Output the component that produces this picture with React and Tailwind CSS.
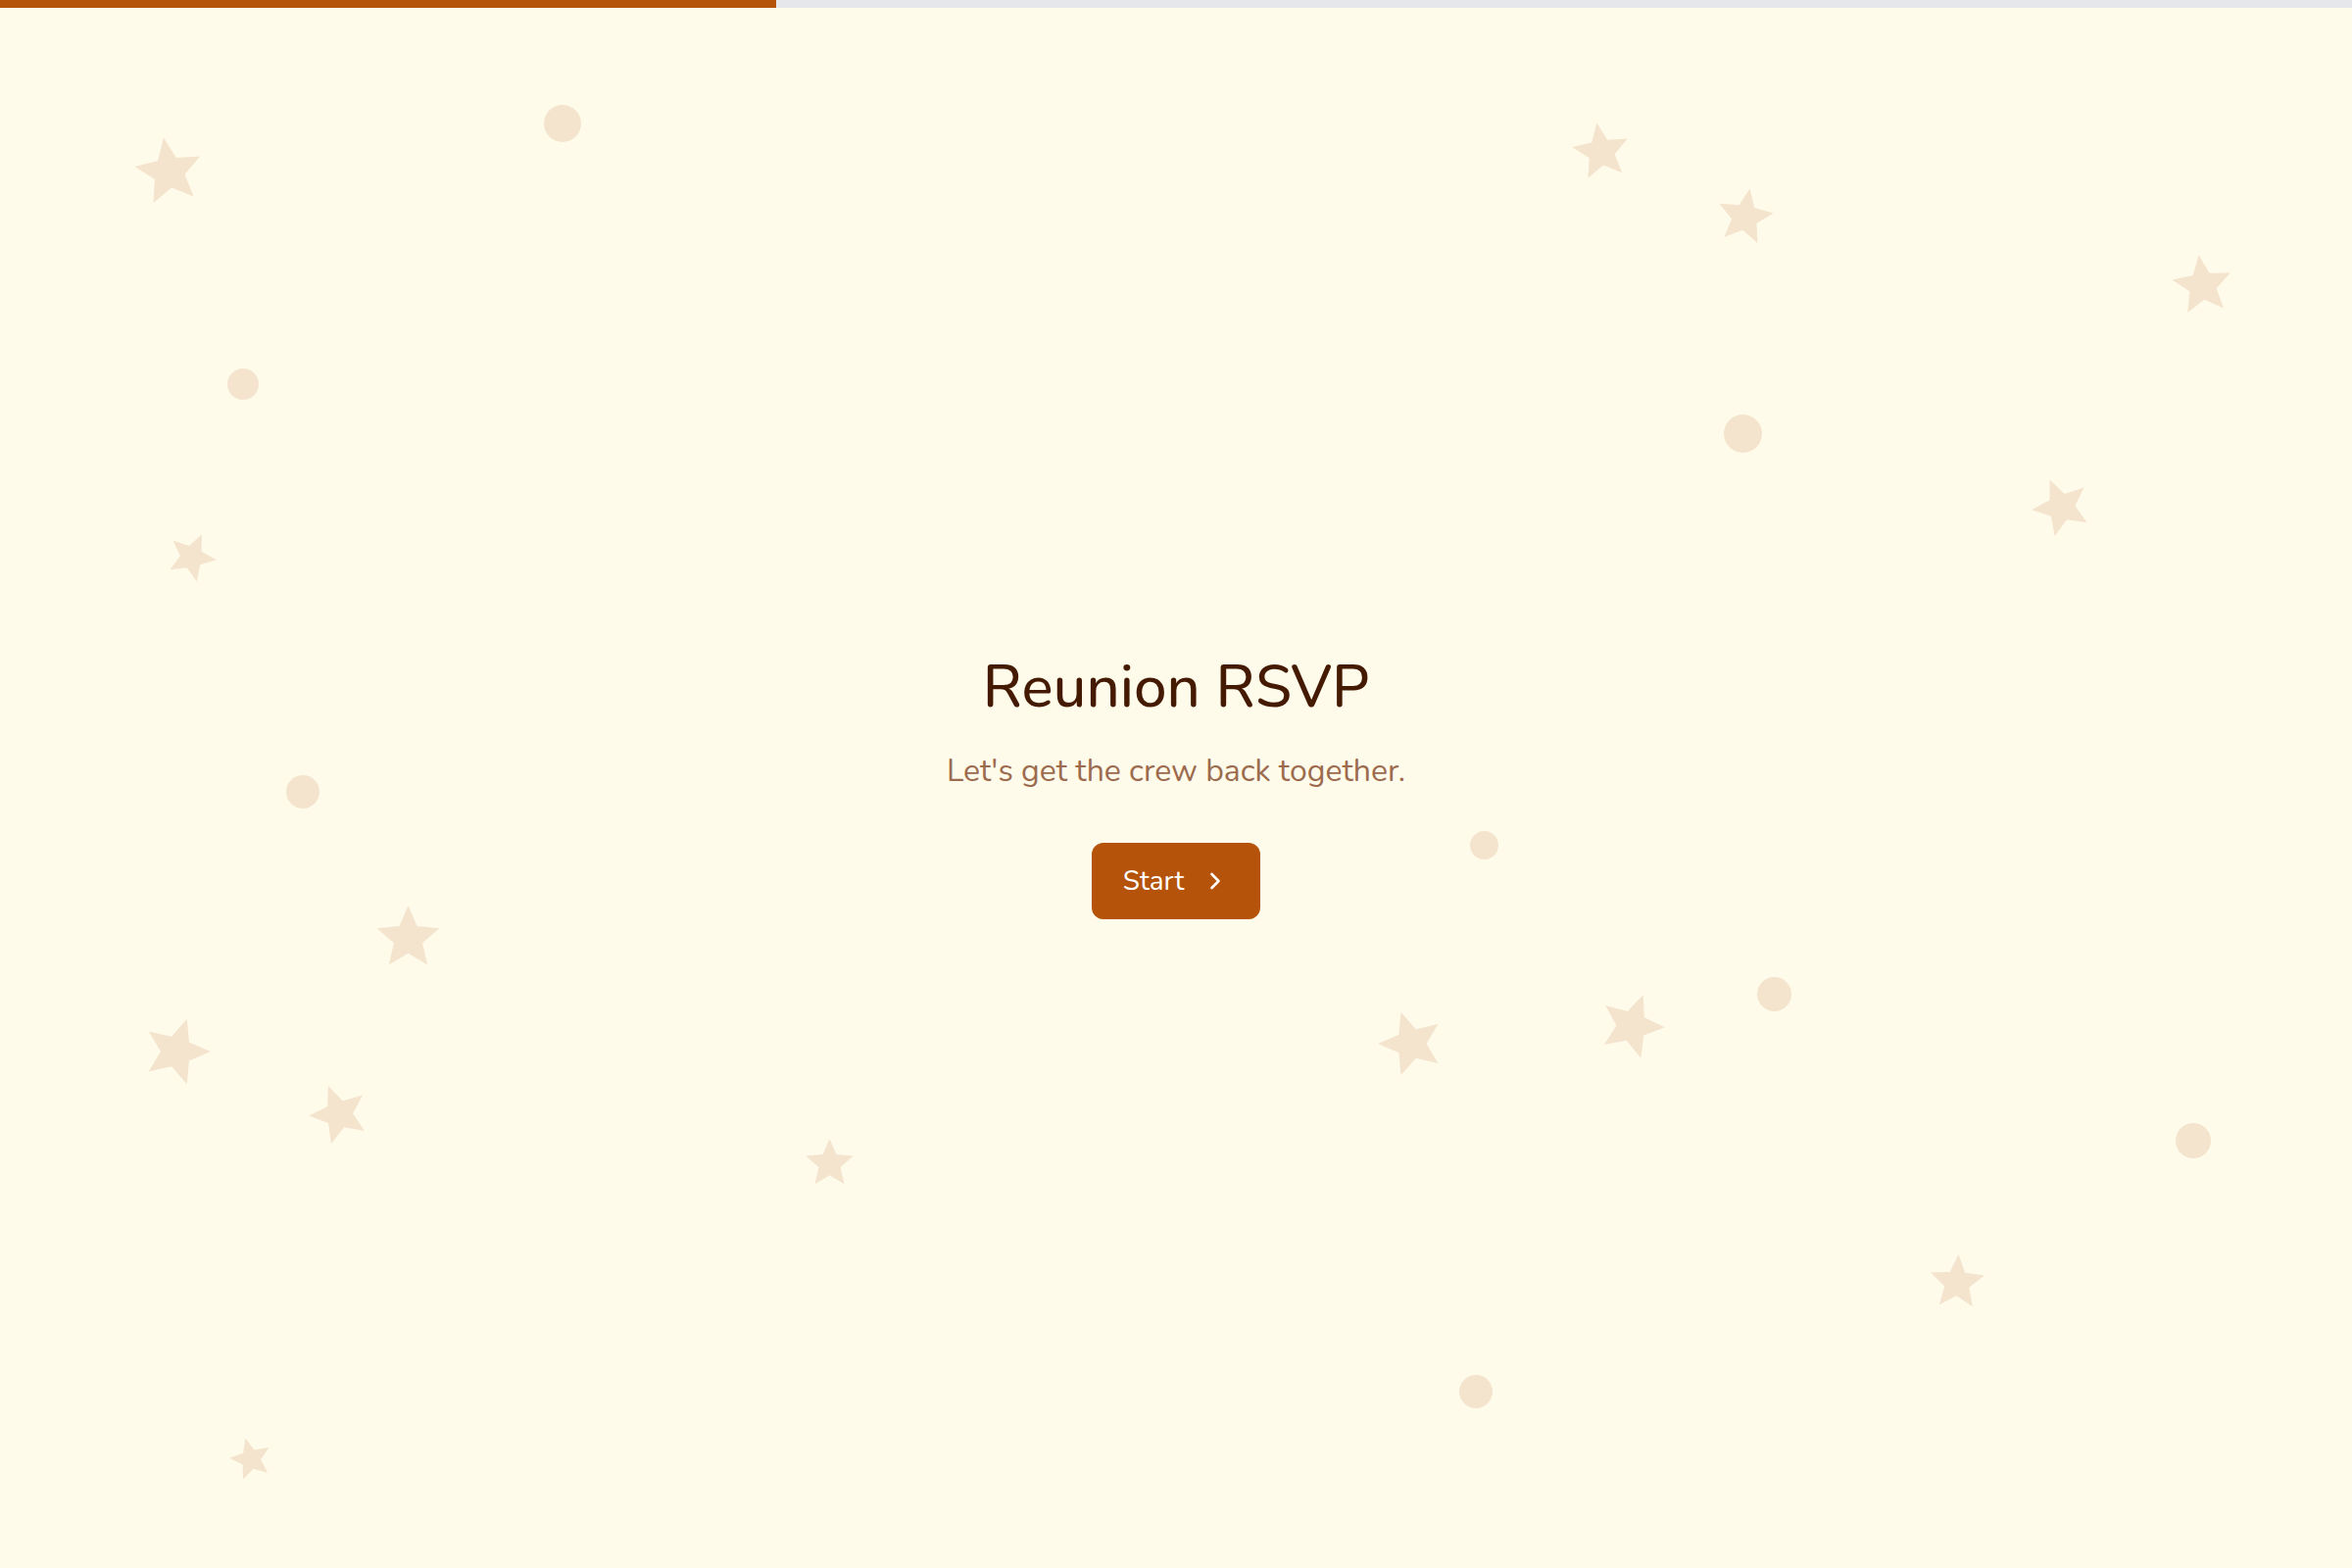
import { ChevronRight } from 'lucide-react';

const STAR_POINTS = '12,0 15.23,7.55 23.41,8.29 17.23,13.7 19.05,21.71 12,17.5 4.95,21.71 6.77,13.7 0.59,8.29 8.77,7.55';

// decorative confetti: [x, y, size, rotation]
const stars = [
  [172, 175, 71, -9],
  [195, 568, 51, 24],
  [1634, 155, 60, -9],
  [1780, 221, 59, 10],
  [2247, 291, 63, -7],
  [2103, 517, 61, -23],
  [416, 957, 67, 0],
  [180, 1073, 70, 18],
  [346, 1137, 62, -21],
  [846, 1187, 51, 0],
  [256, 1489, 44, -15],
  [1440, 1065, 68, -18],
  [1665, 1047, 68, 20],
  [1997, 1309, 58, 3],
];

const dots = [
  [574, 126, 38],
  [248, 392, 32],
  [1778, 442, 39],
  [309, 808, 34],
  [1514, 862, 29],
  [1810, 1014, 35],
  [2238, 1164, 36],
  [1506, 1420, 34],
];

function Star({ x, y, size, rot }) {
  return (
    <svg
      viewBox="0 0 24 24"
      className="absolute fill-[#f4e4cd]"
      style={{ left: x - size / 2, top: y - size / 2, width: size, height: size, transform: `rotate(${rot}deg)` }}
    >
      <polygon points={STAR_POINTS} />
    </svg>
  );
}

export default function App() {
  return (
    <div className="relative min-h-screen h-[1600px] flex flex-col bg-[#fffbeb] overflow-hidden font-['Nunito','Lato','Open_Sans',sans-serif]">
      <div className="h-2 w-full bg-gray-200 shrink-0 relative z-10">
        <div className="h-full w-[33%] bg-[#b45309]" />
      </div>

      <div className="absolute inset-0 pointer-events-none">
        {stars.map(([x, y, s, r], i) => (
          <Star key={i} x={x} y={y} size={s} rot={r} />
        ))}
        {dots.map(([x, y, d], i) => (
          <div
            key={i}
            className="absolute rounded-full bg-[#f4e4cd]"
            style={{ left: x - d / 2, top: y - d / 2, width: d, height: d }}
          />
        ))}
      </div>

      <main className="relative flex-1 flex flex-col items-center justify-center text-center">
        <h1 className="text-6xl leading-none text-[#451a03] font-medium">Reunion RSVP</h1>
        <p className="mt-[36px] text-[32px] leading-10 text-[#9c6b4e]">Let's get the crew back together.</p>
        <button
          type="button"
          className="mt-[53px] h-[78px] px-8 flex items-center gap-[18px] rounded-xl bg-[#b45309] text-white text-[28px]"
        >
          Start
          <ChevronRight size={28} strokeWidth={2.25} />
        </button>
      </main>
    </div>
  );
}
